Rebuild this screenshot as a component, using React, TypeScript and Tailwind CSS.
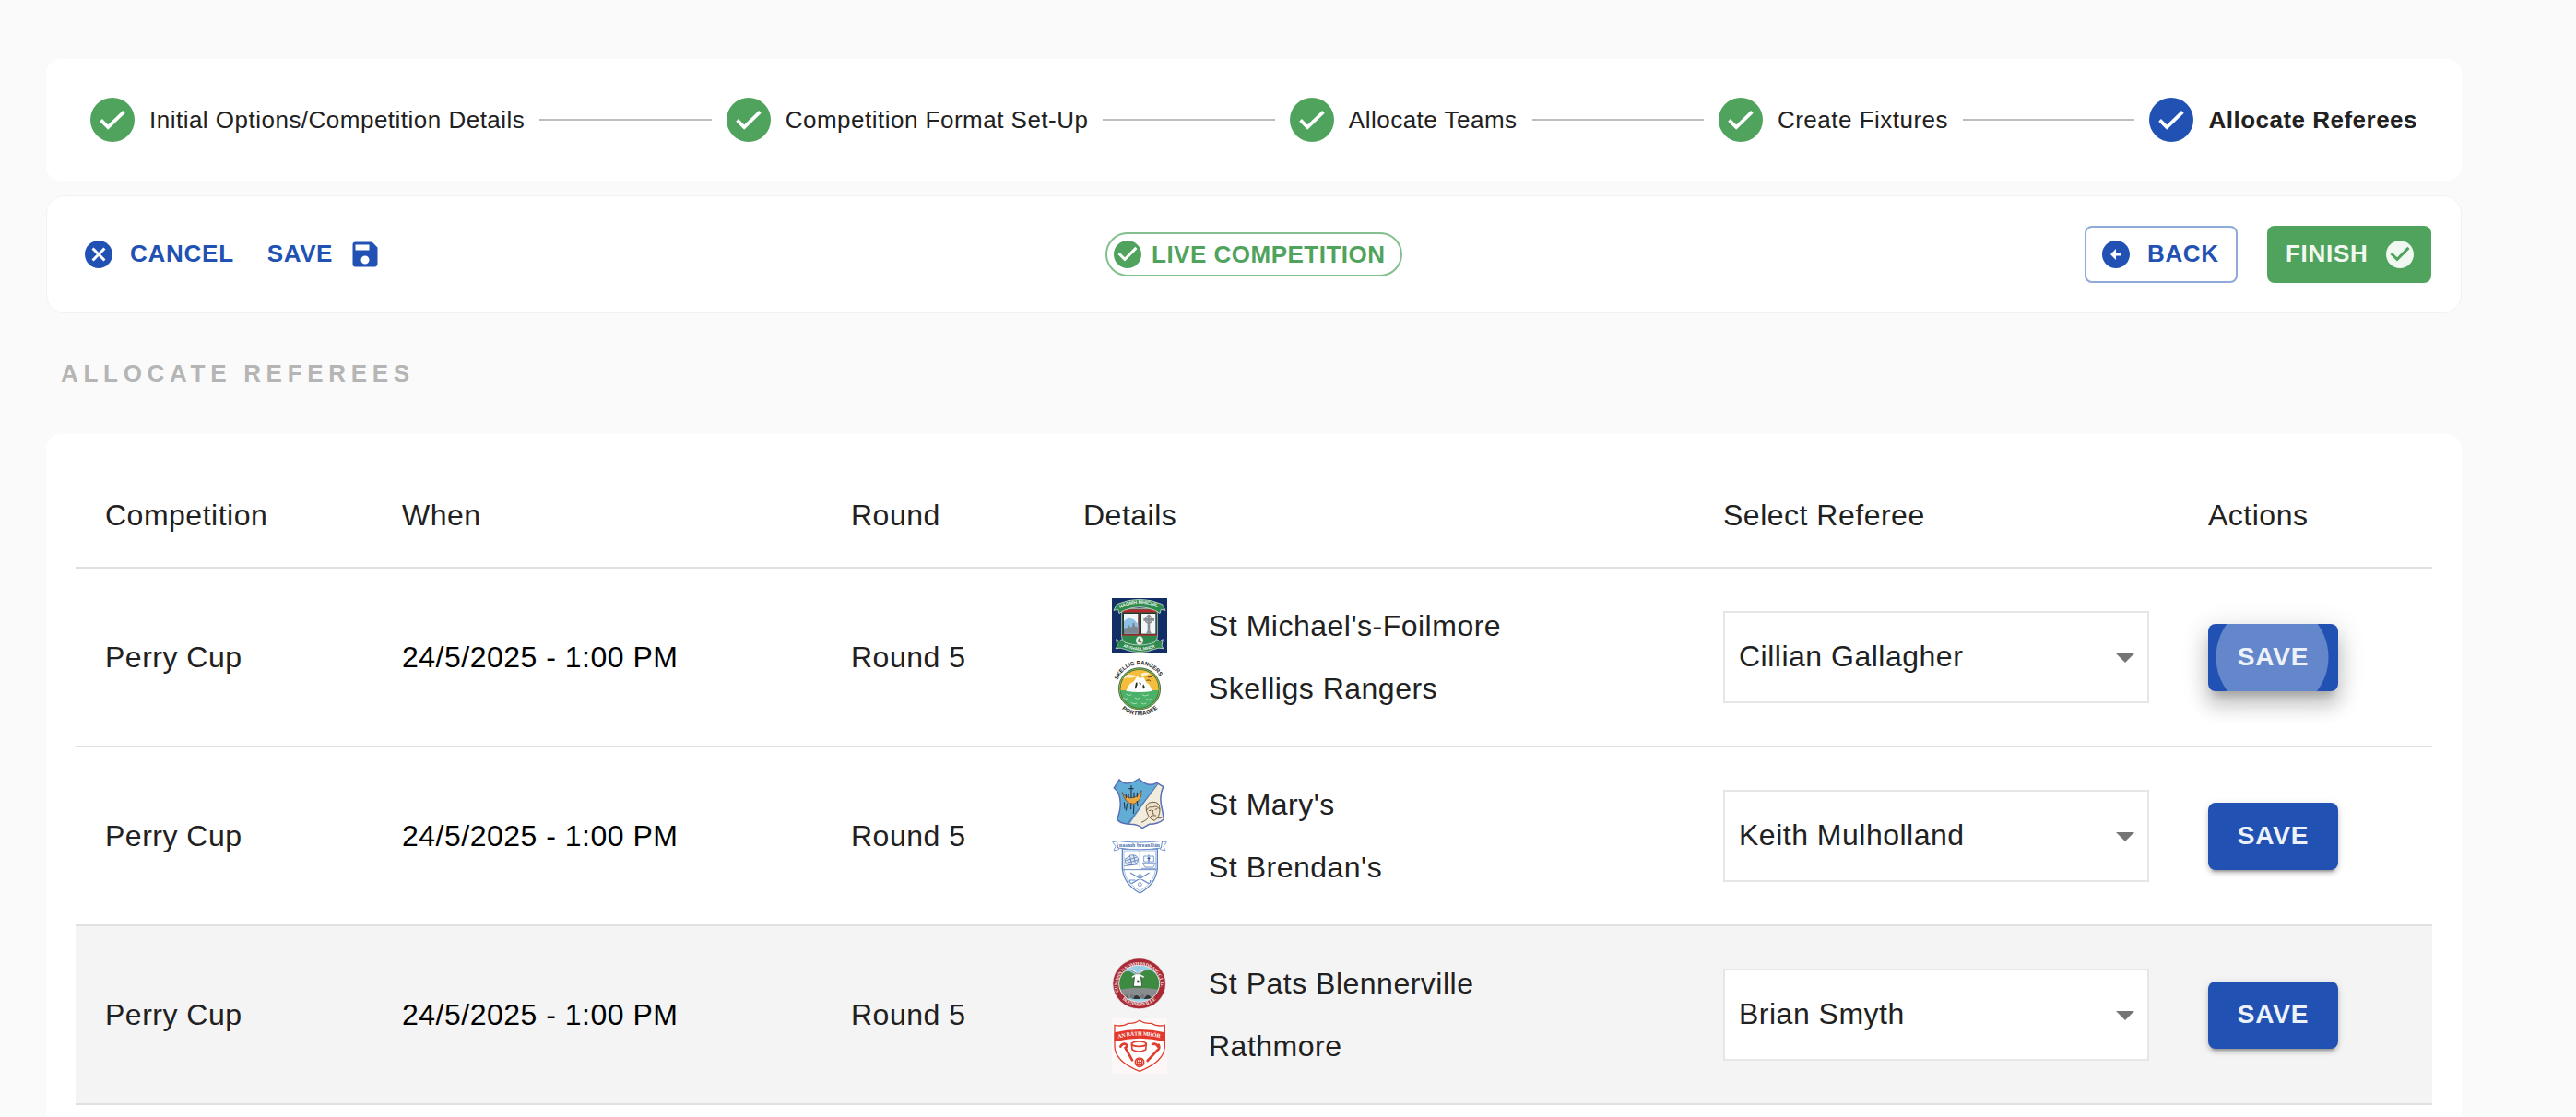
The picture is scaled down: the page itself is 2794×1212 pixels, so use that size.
import type { ReactNode } from "react";
import { MdCancel, MdSave, MdCheckCircle, MdArrowCircleLeft } from "react-icons/md";

const steps = [
  "Initial Options/Competition Details",
  "Competition Format Set-Up",
  "Allocate Teams",
  "Create Fixtures",
  "Allocate Referees",
];

function Crest({ children }: { children: ReactNode }) {
  return (
    <svg viewBox="0 0 180 180" className="block size-[60px] shrink-0" fontFamily="Liberation Sans, sans-serif" fontWeight="700" letterSpacing="0">
      {children}
    </svg>
  );
}

function MichaelsCrest() {
  return (
    <Crest>
      <rect width="180" height="180" fill="#122e66" />
      <path d="M32 34H148V128Q146 152 90 164Q34 152 32 128Z" fill="#2f8a4e" stroke="#aab4b2" strokeWidth="3" />
      <rect x="35" y="37" width="110" height="10" fill="#b5262d" />
      <rect x="34" y="47" width="112" height="73" fill="#1e3b2c" />
      <rect x="39" y="51" width="46" height="65" fill="#f2f6f8" />
      <path d="M39 76Q50 62 60 66Q72 66 85 84V116H39Z" fill="#8fc0e6" />
      <path d="M39 98L52 96L54 88H58V94H66L68 80H73L75 92H80L85 98V116H39Z" fill="#7c8794" />
      <rect x="96" y="51" width="46" height="65" fill="#f2f6f8" />
      <circle cx="120" cy="70" r="11" fill="none" stroke="#8a8d92" strokeWidth="5" />
      <path d="M116 53H124V66H138V74H124V106L129 116H111L116 106V74H103V66H116Z" fill="#8a8d92" />
      <rect x="88" y="47" width="5" height="72" fill="#b5262d" />
      <rect x="33" y="118" width="114" height="4" fill="#b5262d" />
      <ellipse cx="90" cy="138" rx="12" ry="14" fill="#e8efe8" />
      <path d="M83 142Q87 128 91 130Q88 138 92 145Z" fill="#3c8f57" />
      <path d="M92 135L98 145H88Z" fill="#c9383b" />
      <path d="M6 40L16 20Q90 -12 164 20L174 40L160 37L156 50Q150 44 140 40Q90 18 40 40Q30 44 24 50L20 37Z" fill="#2f8a4e" stroke="#cfd8d2" strokeWidth="2.5" />
      <path d="M14 134L24 140L34 134Q38 146 54 148Q90 158 126 148Q142 146 146 134L156 140L166 134L162 156L168 164Q150 160 140 166Q90 186 40 166Q30 160 12 164L18 156Z" fill="#2f8a4e" stroke="#cfd8d2" strokeWidth="2.5" />
      <path id="mich-top" d="M26 34Q90 2 156 34" fill="none" />
      <path id="mich-bottom" d="M36 158Q90 182 146 158" fill="none" />
      <text fontSize="16" fill="#e9f2ea"><textPath href="#mich-top" textLength="126">NAOMH MHICHÍL</textPath></text>
      <text fontSize="14" fill="#e9f2ea"><textPath href="#mich-bottom" textLength="108">AN FHAILL MHÓR</textPath></text>
    </Crest>
  );
}

function SkelligsCrest() {
  return (
    <Crest>
      <clipPath id="skel-clip"><circle cx="90" cy="91" r="62" /></clipPath>
      <circle cx="90" cy="91" r="69" fill="#3c5a2c" />
      <circle cx="90" cy="91" r="67" fill="#7cb45a" />
      <circle cx="90" cy="91" r="63.5" fill="#35502c" />
      <g clipPath="url(#skel-clip)">
        <rect x="25" y="25" width="130" height="75" fill="#f6bd3c" />
        <rect x="25" y="96" width="130" height="70" fill="#4bb068" />
        <path d="M30 50Q46 38 60 46Q74 44 80 52Q60 58 48 54Q40 60 30 58ZM96 42Q110 34 124 42Q112 50 96 48Z" fill="#fbf0d2" />
        <path d="M46 98L58 76L72 66L82 50L92 58L102 52L112 70L122 78L132 98Q90 106 46 98Z" fill="#fdfdfb" />
        <path d="M78 72L82 70L83 78L77 92L75 86ZM90 66L95 74L93 80L89 74ZM102 76L107 84L104 92L100 84Z" fill="#20261f" />
      </g>
      <path d="M108 50Q116 48 120 54Q126 50 132 54M112 64Q122 60 126 66" fill="none" stroke="#3b3320" strokeWidth="2.5" />
      <path d="M46 108Q54 116 64 110M98 110Q108 118 120 110M36 120Q44 128 52 122M74 120Q84 128 92 120M112 124Q120 130 128 124M62 136Q72 144 82 138M96 138Q104 144 112 138" fill="none" stroke="#b9e3c2" strokeWidth="2.5" />
      <path id="skel-top" d="M18 66A75 75 0 0 1 162 66" fill="none" />
      <path id="skel-bottom" d="M24 148A88 88 0 0 0 158 146" fill="none" />
      <text fontSize="18" fill="#222"><textPath href="#skel-top" textLength="172" startOffset="4">SKELLIG RANGERS</textPath></text>
      <text fontSize="19" fill="#222"><textPath href="#skel-bottom" textLength="128" startOffset="12">PORTMAGEE</textPath></text>
    </Crest>
  );
}

function MarysCrest() {
  const outline = "M7 36L24 9Q46 34 88 6Q118 36 146 19L167 32Q152 66 164 108L169 138Q150 154 122 154L99 167Q84 154 60 154Q26 152 17 138Q32 100 26 70Q24 50 7 36Z";
  return (
    <Crest>
      <clipPath id="mary-clip"><path d={outline} /></clipPath>
      <g clipPath="url(#mary-clip)">
        <rect width="180" height="180" fill="#62add6" />
        <path d="M180 0L150 18L48 168H180Z" fill="#f1ecdc" />
      </g>
      <path d="M150 22L50 154" stroke="#5573b5" strokeWidth="3.5" />
      <path d={outline} fill="none" stroke="#5a6fb4" strokeWidth="4.5" />
      <path d="M34 50Q40 66 62 68Q84 68 96 44Q98 78 72 88Q42 88 34 50Z" fill="#eba944" stroke="#6b4b25" strokeWidth="2.5" />
      <path d="M63 28V70M55 38H71M46 56V70M54 54V70M72 50V68M82 50V66M40 82L42 104M50 86L46 110M62 88V106M72 90L70 120M82 78L84 96" fill="none" stroke="#27394d" strokeWidth="3.5" />
      <path d="M112 108Q108 84 132 82Q156 80 156 106Q156 132 138 142Q118 136 112 108ZM112 108Q122 94 134 98Q146 92 156 106M120 110L128 108M140 106L148 104M134 108L132 120L138 120M126 128Q134 124 144 126M118 134Q104 146 96 148M148 134Q160 136 166 130" fill="#efe2c8" stroke="#5a4430" strokeWidth="2.5" />
    </Crest>
  );
}

function BrendansCrest() {
  return (
    <Crest>
      <path d="M34 30H148V96Q142 146 91 174Q40 146 34 96Z" fill="#fff" stroke="#5e84c2" strokeWidth="4" />
      <path d="M39 36H143V96Q137 142 91 167Q45 142 39 96Z" fill="none" stroke="#86a3d2" strokeWidth="2" />
      <path d="M91 36V98M36 98H146" stroke="#6b8ec8" strokeWidth="3" />
      <path d="M2 8L16 6L24 14L22 32L6 36L12 22ZM178 8L164 6L156 14L158 32L174 36L168 22Z" fill="#fff" stroke="#6b8ec8" strokeWidth="2.5" />
      <path d="M16 4Q90 14 164 4L160 27Q90 38 20 27Z" fill="#fff" stroke="#6b8ec8" strokeWidth="3" />
      <text x="24" y="25" fontSize="17" fill="#4a6da9" fontFamily="Liberation Serif, serif" textLength="132">naomh breanDán</text>
      <path d="M42 64L52 58L62 50L78 52L86 62L84 74Q66 88 46 80ZM46 68L80 58M50 76L84 66M40 86L86 80M58 52L64 78M70 50L76 76" fill="#dce6f5" stroke="#5f7fb3" strokeWidth="2.5" />
      <path d="M100 76H142L134 90H108ZM120 48V76M104 54H136V72H104ZM96 94H142" fill="#fff" stroke="#6b8ec8" strokeWidth="2.5" />
      <path d="M120 57V69M115 61H125" stroke="#33559b" strokeWidth="3" />
      <path d="M60 108L118 142Q128 142 124 132M122 108L66 142Q56 142 58 132L76 132" fill="none" stroke="#6b8ec8" strokeWidth="3.5" />
      <circle cx="91" cy="118" r="5" fill="#fff" stroke="#6b8ec8" strokeWidth="2.5" />
      <circle cx="91" cy="146" r="6" fill="#fff" stroke="#6b8ec8" strokeWidth="2.5" />
    </Crest>
  );
}

function PatsCrest() {
  return (
    <Crest>
      <clipPath id="pats-clip"><ellipse cx="89" cy="91" rx="66" ry="60" /></clipPath>
      <ellipse cx="89" cy="91" rx="87" ry="83" fill="#e6d3d4" />
      <ellipse cx="89" cy="91" rx="85" ry="81" fill="#a92b36" />
      <g clipPath="url(#pats-clip)">
        <rect width="180" height="180" fill="#93cfe6" />
        <path d="M20 78Q40 40 64 54Q80 66 88 64Q108 40 132 50Q156 66 160 110H20Z" fill="#3c8b41" />
        <path d="M18 116Q50 102 90 106Q130 102 162 116V138H18Z" fill="#8a8d8f" />
        <path d="M30 140Q42 116 56 140ZM66 142Q80 116 94 142ZM104 142Q116 116 130 140ZM134 138Q144 120 154 138Z" fill="#303436" />
        <path d="M20 136Q90 148 160 136V170H20Z" fill="#9bd3e8" />
        <path d="M34 136L40 126H50L48 140ZM90 138L96 124H106L104 142ZM58 138L62 124H70L72 140Z" fill="#777b7e" />
      </g>
      <ellipse cx="89" cy="91" rx="66" ry="60" fill="none" stroke="#ecdede" strokeWidth="3" />
      <path d="M74 64Q84 48 94 64L98 100H70Z" fill="#fff" stroke="#3c4443" strokeWidth="2.5" />
      <path d="M84 59L62 44M84 59L106 46M84 59L66 70M84 59L104 70" stroke="#f2f4f2" strokeWidth="5" />
      <path d="M60 46L84 60L108 48" fill="none" stroke="#4a4f4e" strokeWidth="2" />
      <path d="M82 80H88V88H82Z" fill="#2d3332" />
      <path id="pats-top" d="M24 122A70 66 0 1 1 154 122" fill="none" />
      <path id="pats-bottom" d="M22 128A80 78 0 0 0 156 128" fill="none" />
      <g fontFamily="Liberation Serif, serif" fill="#f6e6e6">
        <text fontSize="16"><textPath href="#pats-top" textLength="238" startOffset="4">CUMANN NAOMH PADRAIG C.L.G.</textPath></text>
        <text fontSize="16"><textPath href="#pats-bottom" textLength="120" startOffset="18">BLENNERVILLE</textPath></text>
      </g>
    </Crest>
  );
}

function RathmoreCrest() {
  return (
    <Crest>
      <rect width="180" height="180" fill="#fdf8f7" />
      <path d="M9 22Q34 28 54 16Q74 18 90 6Q106 18 128 16Q148 28 172 22V90Q172 140 90 172Q9 140 9 90Z" fill="#fff" stroke="#e0402f" strokeWidth="4" />
      <path d="M8 46Q90 26 173 46V76Q90 54 8 76Z" fill="#e3382b" />
      <path id="rath-band" d="M20 65Q90 46 162 65" fill="none" />
      <text fontSize="18" fill="#fff" fontFamily="Liberation Serif, serif"><textPath href="#rath-band" textLength="138">AN RÁTH MHÓR</textPath></text>
      <path d="M64 82Q88 70 112 82L110 102Q88 114 66 102Z" fill="#fff" stroke="#e0402f" strokeWidth="5" />
      <ellipse cx="88" cy="83" rx="23" ry="8" fill="#fff" stroke="#e0402f" strokeWidth="5" />
      <path d="M28 92Q34 80 46 84Q52 92 44 96L66 136M150 92Q144 80 132 84M152 86Q158 98 148 104L116 138" fill="none" stroke="#e0402f" strokeWidth="8" strokeLinecap="round" />
      <circle cx="90" cy="143" r="14" fill="#fff" stroke="#e0402f" strokeWidth="5" />
      <path d="M82 134H98V152H82ZM82 143H98M90 134V152" fill="none" stroke="#e0402f" strokeWidth="4" />
    </Crest>
  );
}

const fixtures = [
  { teams: [["St Michael's-Foilmore", <MichaelsCrest />], ["Skelligs Rangers", <SkelligsCrest />]], referee: "Cillian Gallagher", pressed: true, hovered: false },
  { teams: [["St Mary's", <MarysCrest />], ["St Brendan's", <BrendansCrest />]], referee: "Keith Mulholland", pressed: false, hovered: false },
  { teams: [["St Pats Blennerville", <PatsCrest />], ["Rathmore", <RathmoreCrest />]], referee: "Brian Smyth", pressed: false, hovered: true },
] as { teams: [string, ReactNode][]; referee: string; pressed: boolean; hovered: boolean }[];

const columns = "grid grid-cols-[322px_487px_252px_694px_526px_1fr] items-center border-b-2 border-[#e0e0e0] pl-8";

function Step({ label, current }: { label: string; current: boolean }) {
  return (
    <div className="flex shrink-0 items-center gap-4">
      <span className={`flex size-12 items-center justify-center rounded-full ${current ? "bg-[#2152b3]" : "bg-[#4fa35d]"}`}>
        <svg viewBox="0 0 28 21" className="h-[21px] w-7"><path d="M1.6 10.4L9.2 18L26.4 1.4" fill="none" stroke="#fff" strokeWidth="3.8" /></svg>
      </span>
      <span className={`whitespace-nowrap ${current ? "font-bold tracking-[0.49px]" : "tracking-[0.49px]"}`}>{label}</span>
    </div>
  );
}

function SaveButton({ pressed }: { pressed: boolean }) {
  return (
    <button
      className={`relative flex h-[73px] w-[141px] items-center justify-center rounded-lg bg-[#2152b3] text-[28px] font-bold tracking-[0.8px] text-[#edf1f9] ${
        pressed
          ? "shadow-[0_10px_10px_-6px_rgba(0,0,0,0.2),0_16px_20px_2px_rgba(0,0,0,0.14),0_6px_28px_4px_rgba(0,0,0,0.12)]"
          : "shadow-[0_6px_2px_-4px_rgba(0,0,0,0.2),0_4px_4px_0_rgba(0,0,0,0.14),0_2px_10px_0_rgba(0,0,0,0.12)]"
      }`}
    >
      {pressed && (
        <span className="absolute inset-0 flex items-center justify-center overflow-hidden rounded-lg">
          <span className="size-[122px] shrink-0 -translate-x-[1.5px] rounded-full bg-white/30" />
        </span>
      )}
      <span className="relative">SAVE</span>
    </button>
  );
}

export default function App() {
  return (
    <div className="flex h-[1212px] w-[2794px] flex-col overflow-hidden bg-[#fafafa] pt-16 pl-[50px] font-['Liberation_Sans',Arial,sans-serif] text-[26px] text-[#212121]">
      <div className="flex h-[132px] w-[2620px] shrink-0 items-center rounded-2xl bg-white px-12">
        {steps.map((label, i) => (
          <div key={label} className="contents">
            {i > 0 && <span className="mx-4 h-0.5 flex-1 bg-[#bdbdbd]" />}
            <Step label={label} current={i === steps.length - 1} />
          </div>
        ))}
      </div>

      <div className="mt-4 flex h-32 w-[2620px] shrink-0 items-center justify-between rounded-[20px] border border-[#f2f2f2] bg-white pr-8 pl-[38px] font-bold text-[#2152b3]">
        <div className="flex w-[1148px] items-center">
          <button className="flex items-center gap-4">
            <MdCancel className="size-9" />
            <span className="-mt-0.5 tracking-[0.74px]">CANCEL</span>
          </button>
          <button className="ml-9 flex items-center gap-[17px]">
            <span className="-mt-0.5 tracking-[0.6px]">SAVE</span>
            <MdSave className="size-9" />
          </button>
        </div>
        <div className="-ml-10 flex h-12 w-[322px] items-center rounded-full border-2 border-[#84c08e] pl-1 text-[#4fa35d]">
          <MdCheckCircle className="size-9 shrink-0" />
          <span className="ml-2 whitespace-nowrap tracking-[0.5px]">LIVE COMPETITION</span>
        </div>
        <div className="flex w-[1114px] items-center justify-end gap-8">
          <button className="flex h-[62px] w-[166px] items-center rounded-lg border-2 border-[#8fa9d9] pl-[14px]">
            <MdArrowCircleLeft className="size-9 shrink-0" />
            <span className="-mt-0.5 ml-4 tracking-[0.6px]">BACK</span>
          </button>
          <button className="flex h-[62px] w-[178px] items-center rounded-lg bg-[#4fa35d] pl-5 text-[#f1f8f2]">
            <span className="-mt-0.5 w-[106px] text-left tracking-[0.7px]">FINISH</span>
            <MdCheckCircle className="size-9 shrink-0" />
          </button>
        </div>
      </div>

      <h1 className="mt-[50px] ml-4 h-[30px] shrink-0 leading-[30px] font-bold tracking-[5.7px] text-[#b5b5b5]">ALLOCATE REFEREES</h1>

      <div className="mt-[51px] w-[2620px] flex-1 rounded-t-2xl bg-white px-8 pt-8 text-[32px] leading-[36px] tracking-[0.5px]">
        <div className={`${columns} h-[114px]`}>
          <span>Competition</span>
          <span>When</span>
          <span>Round</span>
          <span>Details</span>
          <span>Select Referee</span>
          <span>Actions</span>
        </div>
        {fixtures.map(({ teams, referee, pressed, hovered }) => (
          <div key={referee} className={`${columns} h-[194px] ${hovered ? "bg-[#f4f4f4]" : ""}`}>
            <span>Perry Cup</span>
            <span className="text-black">24/5/2025 - 1:00 PM</span>
            <span>Round 5</span>
            <div className="flex flex-col gap-2 pl-[31px]">
              {teams.map(([name, crest]) => (
                <div key={name} className="flex items-center gap-[45px]">
                  {crest}
                  <span>{name}</span>
                </div>
              ))}
            </div>
            <div className="flex h-[100px] w-[462px] items-center justify-between border-2 border-[#e6e6e6] bg-white pr-[14px] pl-[15px]">
              <span className="-mt-0.5">{referee}</span>
              <svg viewBox="0 0 20 10" className="mt-0.5 h-[10px] w-5"><path d="M0 0H20L10 10Z" fill="#757575" /></svg>
            </div>
            <SaveButton pressed={pressed} />
          </div>
        ))}
      </div>
    </div>
  );
}
